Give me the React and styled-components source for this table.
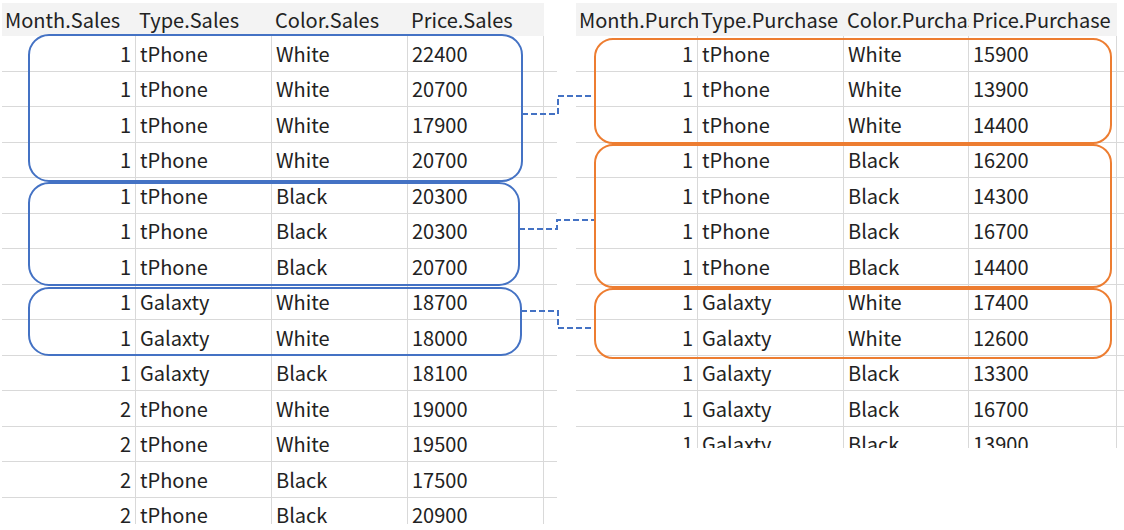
import React from 'react';
import styled, { createGlobalStyle } from 'styled-components';

const GlobalStyle = createGlobalStyle`
  body {
    margin: 0;
    background: #ffffff;
    font-family: "Noto Sans CJK JP", "Noto Sans", sans-serif;
  }
`;

const Page = styled.div`
  position: relative;
  width: 1124px;
  height: 530px;
  display: flex;
  align-items: flex-start;
  gap: 19px;
  padding: 3px 0 0 2px;
  box-sizing: border-box;
  overflow: hidden;
`;

const Sheet = styled.div`
  height: ${({ $height }) => $height}px;
  overflow: hidden;
  flex-shrink: 0;
`;

const Grid = styled.div`
  display: grid;
  grid-template-columns: ${({ $cols }) => $cols};
  grid-template-rows: 33px;
  grid-auto-rows: 35.5px;
`;

const HeadCell = styled.div`
  background: ${({ $blank }) => ($blank ? '#ffffff' : '#f3f3f3')};
  color: #222;
  font-size: 20px;
  line-height: 33px;
  padding-left: 3px;
  white-space: nowrap;
  overflow: hidden;
`;

const Cell = styled.div`
  box-sizing: border-box;
  border-bottom: 1px solid #d9d9d9;
  border-right: ${({ $blank }) => ($blank ? 'none' : '1px solid #d9d9d9')};
  color: #222;
  font-size: 20px;
  display: flex;
  align-items: center;
  justify-content: ${({ $num }) => ($num ? 'flex-end' : 'flex-start')};
  padding: ${({ $num }) => ($num ? '0 4px 0 0' : '0 0 0 4px')};
  white-space: nowrap;
  overflow: hidden;
`;

const Overlay = styled.svg`
  position: absolute;
  left: 0;
  top: 0;
  pointer-events: none;
`;

const salesRows = [
  [1, 'tPhone', 'White', 22400],
  [1, 'tPhone', 'White', 20700],
  [1, 'tPhone', 'White', 17900],
  [1, 'tPhone', 'White', 20700],
  [1, 'tPhone', 'Black', 20300],
  [1, 'tPhone', 'Black', 20300],
  [1, 'tPhone', 'Black', 20700],
  [1, 'Galaxty', 'White', 18700],
  [1, 'Galaxty', 'White', 18000],
  [1, 'Galaxty', 'Black', 18100],
  [2, 'tPhone', 'White', 19000],
  [2, 'tPhone', 'White', 19500],
  [2, 'tPhone', 'Black', 17500],
  [2, 'tPhone', 'Black', 20900],
];

const purchaseRows = [
  [1, 'tPhone', 'White', 15900],
  [1, 'tPhone', 'White', 13900],
  [1, 'tPhone', 'White', 14400],
  [1, 'tPhone', 'Black', 16200],
  [1, 'tPhone', 'Black', 14300],
  [1, 'tPhone', 'Black', 16700],
  [1, 'tPhone', 'Black', 14400],
  [1, 'Galaxty', 'White', 17400],
  [1, 'Galaxty', 'White', 12600],
  [1, 'Galaxty', 'Black', 13300],
  [1, 'Galaxty', 'Black', 16700],
  [1, 'Galaxty', 'Black', 13900],
];

const DataSheet = ({ headers, rows, cols, height }) => (
  <Sheet $height={height}>
    <Grid $cols={cols}>
      {headers.map((h) => (
        <HeadCell key={h}>{h}</HeadCell>
      ))}
      <HeadCell $blank />
      {rows.map((r, i) => (
        <React.Fragment key={i}>
          {r.map((v, j) => (
            <Cell key={j} $num={j === 0}>{v}</Cell>
          ))}
          <Cell $blank />
        </React.Fragment>
      ))}
    </Grid>
  </Sheet>
);

const blueBoxes = [
  { x: 29, y: 35, w: 493, h: 146 },
  { x: 29, y: 183, w: 490, h: 102 },
  { x: 29, y: 288, w: 492, h: 67 },
];

const orangeBoxes = [
  { x: 595, y: 39, w: 516, h: 104 },
  { x: 595, y: 145, w: 516, h: 142 },
  { x: 595, y: 289, w: 516, h: 69 },
];

const links = ['M522 114 H558 V96 H592', 'M519 229 H557 V220 H594', 'M521 311 H558 V328 H592'];

const Annotations = () => (
  <Overlay width="1124" height="530" viewBox="0 0 1124 530">
    {blueBoxes.map((b, i) => (
      <rect key={i} x={b.x} y={b.y} width={b.w} height={b.h} rx="20" fill="none" stroke="#4472c4" strokeWidth="2" />
    ))}
    {orangeBoxes.map((b, i) => (
      <rect key={i} x={b.x} y={b.y} width={b.w} height={b.h} rx="18" fill="none" stroke="#ed7d31" strokeWidth="2" />
    ))}
    {links.map((d, i) => (
      <path key={i} d={d} fill="none" stroke="#4472c4" strokeWidth="2" strokeDasharray="6 3" />
    ))}
  </Overlay>
);

export default function App() {
  return (
    <>
      <GlobalStyle />
      <Page>
        <DataSheet
          headers={['Month.Sales', 'Type.Sales', 'Color.Sales', 'Price.Sales']}
          rows={salesRows}
          cols="134px 136px 136px 136px 13px"
          height={521}
        />
        <DataSheet
          headers={['Month.Purchase', 'Type.Purchase', 'Color.Purchase', 'Price.Purchase']}
          rows={purchaseRows}
          cols="122px 146px 125px 148px 20px"
          height={445}
        />
        <Annotations />
      </Page>
    </>
  );
}
